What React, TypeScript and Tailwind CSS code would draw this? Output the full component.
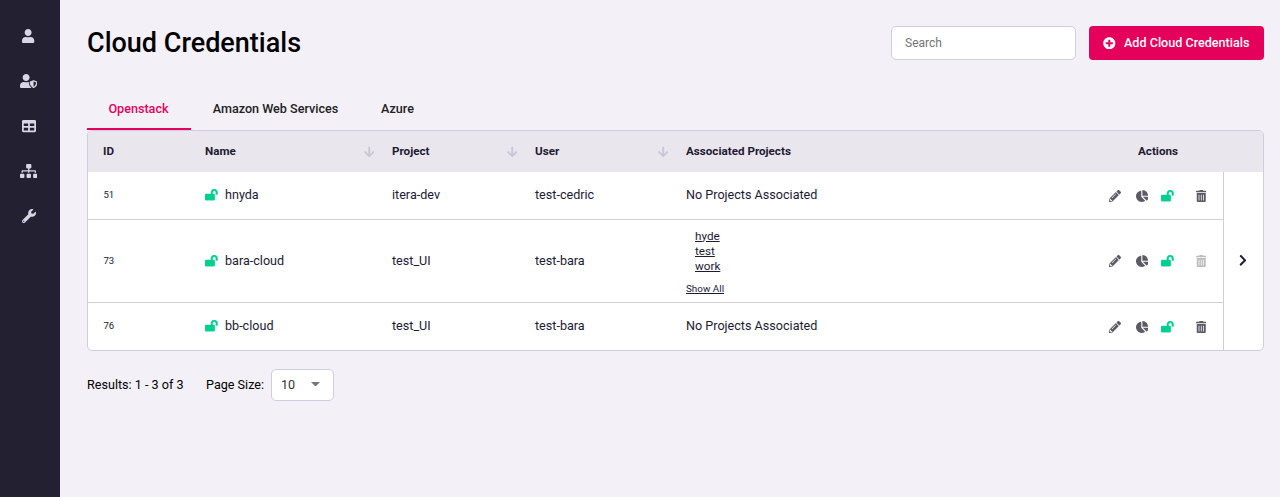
import React from "react";
import {
  FaUser,
  FaUserShield,
  FaTable,
  FaSitemap,
  FaWrench,
  FaLockOpen,
  FaPlusCircle,
  FaTrashAlt,
  FaPencilAlt,
  FaChartPie,
  FaArrowDown,
  FaChevronRight,
} from "react-icons/fa";

interface Credential {
  id: number;
  name: string;
  project: string;
  user: string;
  projects: string[];
}

const rows: Credential[] = [
  { id: 51, name: "hnyda", project: "itera-dev", user: "test-cedric", projects: [] },
  { id: 73, name: "bara-cloud", project: "test_UI", user: "test-bara", projects: ["hyde", "test", "work"] },
  { id: 76, name: "bb-cloud", project: "test_UI", user: "test-bara", projects: [] },
];

function Sidebar() {
  const items = [
    { Icon: FaUser, size: "w-[12.25px]" },
    { Icon: FaUserShield, size: "w-[17.5px]" },
    { Icon: FaTable, size: "w-[14px]" },
    { Icon: FaSitemap, size: "w-[17.5px]" },
    { Icon: FaWrench, size: "w-[14px]" },
  ];
  return (
    <nav className="flex w-[60px] shrink-0 flex-col items-center bg-[#232032] pt-[13px] pr-[3px] text-[14px] text-[#d9d6e4]">
      {items.map(({ Icon, size }, i) => (
        <a key={i} className="flex h-[45px] items-center">
          <Icon className={`h-[14px] ${size}`} />
        </a>
      ))}
    </nav>
  );
}

function HeaderCell({ label, width, sortable }: { label: string; width: string; sortable?: boolean }) {
  return (
    <div className={`flex shrink-0 items-center justify-between ${width}`}>
      <span className="pt-px">{label}</span>
      {sortable && <FaArrowDown className="mr-[18px] h-[12px] w-[10.5px] text-[#c9c6d6]" />}
    </div>
  );
}

function Row({ row, last }: { row: Credential; last: boolean }) {
  const linked = row.projects.length > 0;
  return (
    <div
      className={`flex items-center pl-[15px] ${linked ? "h-[83px]" : "h-[48px]"} ${linked ? "" : last ? "pb-[2px]" : "pb-px"} ${last ? "" : "border-b border-[#d0cde0]"}`}
    >
      <div className="w-[102px] pl-[0.4px] text-[9.6px]">{row.id}</div>
      <div className="flex w-[187px] items-center">
        <FaLockOpen strokeWidth={18} className="mr-[7.4px] h-[11.2px] w-[12.6px] text-[#00cf92]" />
        {row.name}
      </div>
      <div className="w-[143px]">{row.project}</div>
      <div className="w-[151px]">{row.user}</div>
      <div className="grow">
        {linked ? (
          <div className="pt-[2px]">
            <ul className="pl-[9px] text-[11.7px] leading-[15px] underline">
              {row.projects.map((p) => (
                <li key={p}>{p}</li>
              ))}
            </ul>
            <div className="mt-2 text-[9.9px] leading-[14px] underline">Show All</div>
          </div>
        ) : (
          "No Projects Associated"
        )}
      </div>
      <div className={`flex w-[114px] shrink-0 items-center text-[#5b5b66] ${linked ? "" : "pt-[2px]"}`}>
        <FaPencilAlt className="h-[12px] w-[12px]" />
        <FaChartPie className="ml-[14.6px] h-[12px] w-[12.8px]" />
        <FaLockOpen strokeWidth={18} className="ml-[12.6px] h-[11.2px] w-[12.6px] text-[#00cf92]" />
        <FaTrashAlt className={`ml-[22.3px] h-[12px] w-[10.5px] ${linked ? "opacity-40" : ""}`} />
      </div>
    </div>
  );
}

export default function App() {
  return (
    <div className="flex h-[497px] w-full bg-[#f3f0f8] font-['Roboto',sans-serif] text-[12.6px] text-[#221a33]">
      <Sidebar />
      <main className="flex grow flex-col pr-4 pl-[27px]">
        <header className="flex h-[60px] items-end">
          <h1 className="grow self-end pb-px text-[27px] leading-[32px] font-medium text-black">Cloud Credentials</h1>
          <input
            placeholder="Search"
            className="h-[34px] w-[185px] rounded-[5px] border border-[#d0cde0] bg-white px-[13px] text-[12px] placeholder:text-[#757575]"
          />
          <button className="ml-[13px] flex h-[34px] w-[175px] items-center rounded-[4px] bg-[#e5005b] pl-[14.4px] font-medium whitespace-nowrap text-white">
            <FaPlusCircle className="mr-[8px] h-[12.6px] w-[12.6px] shrink-0" />
            Add Cloud Credentials
          </button>
        </header>

        <div className="mt-[27px] flex h-[43px] font-medium text-[#222]">
          <div className="flex w-[104px] items-center justify-center border-b-2 border-[#e5005b] pt-[3px] pr-px text-[#e5005b]">Openstack</div>
          <div className="flex w-[169px] items-center justify-center border-b-2 border-transparent pt-[3px]">Amazon Web Services</div>
          <div className="flex w-[75px] items-center justify-center border-b-2 border-transparent pt-[3px]">Azure</div>
        </div>

        <section className="h-[221px] overflow-hidden rounded-[5px] border border-[#d0cde0] bg-white">
          <div className="flex h-[41px] bg-[#e9e6ed] pl-[15px] text-[11.65px] font-bold">
            <HeaderCell label="ID" width="w-[102px]" />
            <HeaderCell label="Name" width="w-[187px]" sortable />
            <HeaderCell label="Project" width="w-[143px]" sortable />
            <HeaderCell label="User" width="w-[151px]" sortable />
            <HeaderCell label="Associated Projects" width="w-[452px]" />
            <HeaderCell label="Actions" width="w-[60px]" />
          </div>
          <div className="flex h-[178px]">
            <div className="grow">
              {rows.map((r, i) => (
                <Row key={r.id} row={r} last={i === rows.length - 1} />
              ))}
            </div>
            <div className="flex w-[40px] items-center justify-center border-l border-[#d0cde0] pr-px pb-[2px]">
              <FaChevronRight className="h-[12.6px] w-[7.9px]" />
            </div>
          </div>
        </section>

        <footer className="mt-[18px] flex h-[32px] items-center text-black">
          <span className="w-[119px]">Results: 1 - 3 of 3</span>
          <span className="w-[65px]">Page Size:</span>
          <div className="flex h-[32px] w-[63px] items-center justify-between rounded-[5px] border border-[#d0cde0] bg-white pr-[13px] pl-[9px] text-[#333]">
            10
            <svg viewBox="0 0 9 4.5" className="mb-[2px] h-[4.5px] w-[9px] fill-[#757575]">
              <path d="M0 0h9L4.5 4.5z" />
            </svg>
          </div>
        </footer>
      </main>
    </div>
  );
}
